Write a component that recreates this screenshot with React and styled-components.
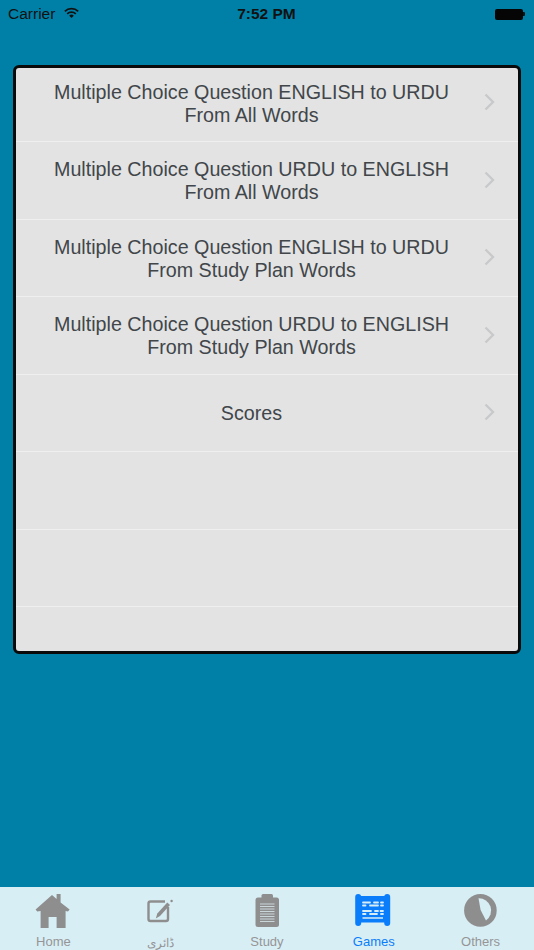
import styled, { createGlobalStyle } from "styled-components";

const GlobalStyle = createGlobalStyle`
  html, body {
    margin: 0;
    padding: 0;
    background: #0080a7;
  }
  * {
    box-sizing: border-box;
  }
`;

const quizzes = [
  ["Multiple Choice Question ENGLISH to URDU", "From All Words"],
  ["Multiple Choice Question URDU to ENGLISH", "From All Words"],
  ["Multiple Choice Question ENGLISH to URDU", "From Study Plan Words"],
  ["Multiple Choice Question URDU to ENGLISH", "From Study Plan Words"],
  ["Scores"],
];

const GRAY = "#8e8e8e";
const BLUE = "#0a7dfb";
const BAR = "#d8eef5";

export default function App() {
  return (
    <Page>
      <GlobalStyle />
      <StatusBar>
        <Carrier>
          Carrier
          <svg width="15" height="12" viewBox="0 0 15 12">
            <path d="M.8 4.300a9.600 9.600 0 0 1 13.400 0" fill="none" stroke="#111" strokeWidth="1.700" />
            <path d="M3.200 6.800a6.200 6.200 0 0 1 8.600 0" fill="none" stroke="#111" strokeWidth="1.700" />
            <path d="M5.200 8.700 7.500 11l2.300-2.300a3.300 3.300 0 0 0-4.600 0z" fill="#111" />
          </svg>
        </Carrier>
        <Clock>7:52 PM</Clock>
        <Battery>
          <BatteryBody />
          <BatteryTip />
        </Battery>
      </StatusBar>
      <Main>
        <Card>
          <RowList>
            {quizzes.map((lines) => (
              <Row key={lines.join()}>
                <RowText>
                  {lines.map((line) => (
                    <div key={line}>{line}</div>
                  ))}
                </RowText>
                <svg width="12" height="18" viewBox="0 0 12 18">
                  <path d="M2.500 1.500l7.500 7.500-7.500 7.500" fill="none" stroke="#c8c9cb" strokeWidth="2.300" />
                </svg>
              </Row>
            ))}
            <Row />
            <Row />
            <Row />
          </RowList>
        </Card>
      </Main>
      <TabBar>
        <Tab>
          <TabIcon>
            <svg width="38" height="34" viewBox="0 0 38 34">
              <path
                d="M18 1l4.600 4V0h4v8.500l9 7-1.600 2-2.400-.5V34h-9V23h-8v11h-8V17l-3.400.5-1.600-2z"
                fill={GRAY}
              />
            </svg>
          </TabIcon>
          <TabLabel>Home</TabLabel>
        </Tab>
        <Tab>
          <TabIcon>
            <svg width="38" height="34" viewBox="0 0 38 34">
              <path
                d="M24 7.500H9.500a2 2 0 0 0-2 2v15.500a2 2 0 0 0 2 2H25a2 2 0 0 0 2-2V13"
                fill="none"
                stroke={GRAY}
                strokeWidth="2.400"
              />
              <path d="M14.800 24.500l1.500-5 10-11 2.700 2.500-10 11z" fill={GRAY} />
              <circle cx="30.600" cy="7" r="1.200" fill={GRAY} />
            </svg>
          </TabIcon>
          <TabLabel $urdu>ڈائری</TabLabel>
        </Tab>
        <Tab>
          <TabIcon>
            <svg width="38" height="34" viewBox="0 0 38 34">
              <rect x="7.500" y="3.500" width="23.500" height="29.500" rx="2.500" fill={GRAY} />
              <rect x="13.500" y="0" width="11.500" height="7" rx="1.500" fill={GRAY} />
              <path
                d="M12 10h14.500M12 12.500h14.500M12 15h14.500M12 17.500h14.500M12 20h14.500M12 22.500h14.500M12 25h14.500M12 27.500h14.500"
                stroke="#c9d6da"
                strokeWidth="1.200"
              />
            </svg>
          </TabIcon>
          <TabLabel>Study</TabLabel>
        </Tab>
        <Tab>
          <TabIcon>
            <svg width="38" height="34" viewBox="0 0 38 34">
              <rect x="0.200" y="0" width="6" height="32" rx="3" fill={BLUE} />
              <rect x="29.200" y="0" width="6" height="32" rx="3" fill={BLUE} />
              <rect x="3" y="2" width="29" height="26.500" fill={BLUE} />
              <path
                d="M8 8.500h7M19 8.500h4M26 8.500h2M8 11.500h2.500M15 11.500h8M26 11.500h2M8 17h8M20 17h3M25.500 17h2.500M8 20h2.500M15 20h7M26 20h2"
                stroke={BAR}
                strokeWidth="1.800"
                strokeLinecap="round"
              />
              <path d="M7.500 24h20.500" stroke={BAR} strokeWidth="1.500" />
            </svg>
          </TabIcon>
          <TabLabel $active>Games</TabLabel>
        </Tab>
        <Tab>
          <TabIcon>
            <svg width="38" height="34" viewBox="0 0 38 34">
              <circle cx="18.400" cy="16.400" r="16.300" fill={GRAY} />
              <path d="M16.500 4.200A12.300 12.300 0 0 1 24 26.500L18.600 16z" fill={BAR} />
            </svg>
          </TabIcon>
          <TabLabel>Others</TabLabel>
        </Tab>
      </TabBar>
    </Page>
  );
}

const Page = styled.div`
  width: 534px;
  height: 950px;
  display: flex;
  flex-direction: column;
  background: #0080a7;
  overflow: hidden;
`;

const StatusBar = styled.div`
  height: 28px;
  padding: 0 9px 0 8px;
  display: grid;
  grid-template-columns: 1fr auto 1fr;
  align-items: center;
  font-family: "Liberation Sans", Arial, sans-serif;
  color: #111;
`;

const Carrier = styled.div`
  display: flex;
  align-items: center;
  gap: 9px;
  font-size: 15.500px;

  svg {
    margin-top: -3px;
  }
`;

const Clock = styled.div`
  font-size: 15.500px;
  font-weight: 700;
`;

const Battery = styled.div`
  justify-self: end;
  display: flex;
  align-items: center;
`;

const BatteryBody = styled.div`
  width: 28px;
  height: 11px;
  border-radius: 2px;
  background: #050505;
`;

const BatteryTip = styled.div`
  width: 2px;
  height: 4px;
  border-radius: 0 1px 1px 0;
  background: #111;
`;

const Main = styled.main`
  flex: 1;
  padding: 37px 13px 0;
`;

const Card = styled.section`
  height: 589px;
  border: 3px solid #0a0a0a;
  border-radius: 6px;
  background: #e3e3e3;
  overflow: hidden;
`;

const RowList = styled.div`
  margin-top: -3.500px;
`;

const Row = styled.div`
  height: 77.500px;
  padding: 0 23px 0 13px;
  display: flex;
  align-items: center;
  border-bottom: 1px solid #efefef;

  svg {
    flex: none;
    margin-bottom: 1px;
  }
`;

const RowText = styled.div`
  flex: 1;
  padding: 2px 9px 0 0;
  text-align: center;
  font-family: "Liberation Sans", Arial, sans-serif;
  font-size: 19.700px;
  line-height: 23px;
  color: #41464a;
`;

const TabBar = styled.nav`
  height: 63px;
  display: grid;
  grid-template-columns: repeat(5, 1fr);
  background: ${BAR};
`;

const Tab = styled.div`
  display: flex;
  flex-direction: column;
  align-items: center;
`;

const TabIcon = styled.div`
  height: 48px;
  padding-top: 7px;
  display: flex;
  align-items: flex-start;
  justify-content: center;
`;

const TabLabel = styled.span`
  font-family: "Liberation Sans", "Noto Sans", Arial, sans-serif;
  font-size: ${(props) => (props.$urdu ? "12px" : "13px")};
  line-height: ${(props) => (props.$urdu ? "17px" : "14px")};
  color: ${(props) => (props.$active ? BLUE : "#959595")};
`;
